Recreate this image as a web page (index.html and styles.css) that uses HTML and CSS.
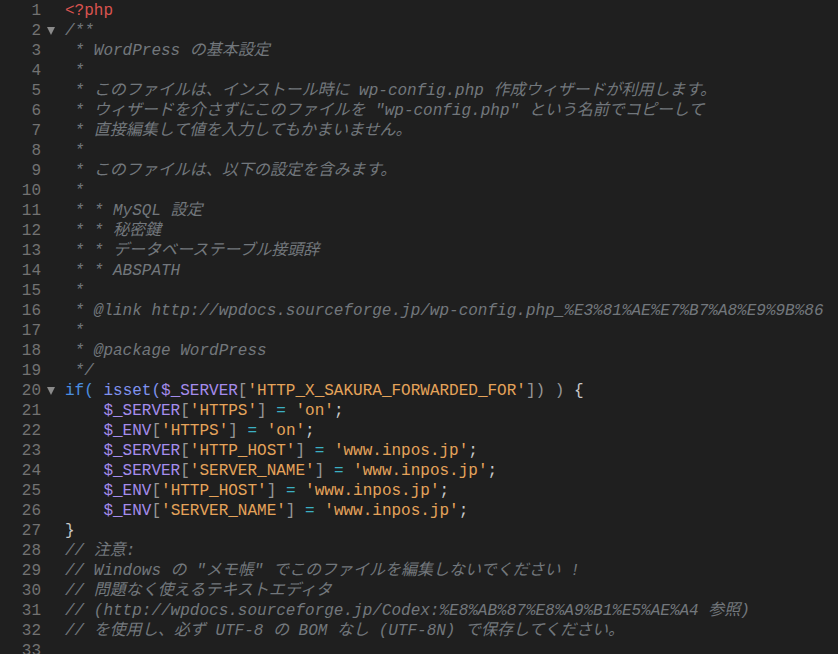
FILE: index.html
```html
<!DOCTYPE html>
<html lang="ja">
<head>
  <meta charset="UTF-8" />
  <title>wp-config.php</title>
  <link rel="stylesheet" href="styles.css">
</head>
<body>

<div class="editor">
  <div class="line"><span class="ln">1</span><span class="fold"></span><span class="code"><span class="tag">&lt;?php</span></span></div>
  <div class="line"><span class="ln">2</span><span class="fold open"></span><span class="code c">/**</span></div>
  <div class="line"><span class="ln">3</span><span class="fold"></span><span class="code c"> * WordPress の基本設定</span></div>
  <div class="line"><span class="ln">4</span><span class="fold"></span><span class="code c"> *</span></div>
  <div class="line"><span class="ln">5</span><span class="fold"></span><span class="code c"> * このファイルは、インストール時に wp-config.php 作成ウィザードが利用します。</span></div>
  <div class="line"><span class="ln">6</span><span class="fold"></span><span class="code c"> * ウィザードを介さずにこのファイルを "wp-config.php" という名前でコピーして</span></div>
  <div class="line"><span class="ln">7</span><span class="fold"></span><span class="code c"> * 直接編集して値を入力してもかまいません。</span></div>
  <div class="line"><span class="ln">8</span><span class="fold"></span><span class="code c"> *</span></div>
  <div class="line"><span class="ln">9</span><span class="fold"></span><span class="code c"> * このファイルは、以下の設定を含みます。</span></div>
  <div class="line"><span class="ln">10</span><span class="fold"></span><span class="code c"> *</span></div>
  <div class="line"><span class="ln">11</span><span class="fold"></span><span class="code c"> * * MySQL 設定</span></div>
  <div class="line"><span class="ln">12</span><span class="fold"></span><span class="code c"> * * 秘密鍵</span></div>
  <div class="line"><span class="ln">13</span><span class="fold"></span><span class="code c"> * * データベーステーブル接頭辞</span></div>
  <div class="line"><span class="ln">14</span><span class="fold"></span><span class="code c"> * * ABSPATH</span></div>
  <div class="line"><span class="ln">15</span><span class="fold"></span><span class="code c"> *</span></div>
  <div class="line"><span class="ln">16</span><span class="fold"></span><span class="code c"> * @link http://wpdocs.sourceforge.jp/wp-config.php_%E3%81%AE%E7%B7%A8%E9%9B%86</span></div>
  <div class="line"><span class="ln">17</span><span class="fold"></span><span class="code c"> *</span></div>
  <div class="line"><span class="ln">18</span><span class="fold"></span><span class="code c"> * @package WordPress</span></div>
  <div class="line"><span class="ln">19</span><span class="fold"></span><span class="code c"> */</span></div>
  <div class="line"><span class="ln">20</span><span class="fold open"></span><span class="code"><span class="kw">if(</span> <span class="fn">isset(</span><span class="var">$_SERVER</span><span class="pn">[</span><span class="str">'HTTP_X_SAKURA_FORWARDED_FOR'</span><span class="pn">]) )</span> {</span></div>
  <div class="line"><span class="ln">21</span><span class="fold"></span><span class="code">    <span class="var">$_SERVER</span><span class="pn">[</span><span class="str">'HTTPS'</span><span class="pn">]</span> <span class="op">=</span> <span class="str">'on'</span>;</span></div>
  <div class="line"><span class="ln">22</span><span class="fold"></span><span class="code">    <span class="var">$_ENV</span><span class="pn">[</span><span class="str">'HTTPS'</span><span class="pn">]</span> <span class="op">=</span> <span class="str">'on'</span>;</span></div>
  <div class="line"><span class="ln">23</span><span class="fold"></span><span class="code">    <span class="var">$_SERVER</span><span class="pn">[</span><span class="str">'HTTP_HOST'</span><span class="pn">]</span> <span class="op">=</span> <span class="str">'www.inpos.jp'</span>;</span></div>
  <div class="line"><span class="ln">24</span><span class="fold"></span><span class="code">    <span class="var">$_SERVER</span><span class="pn">[</span><span class="str">'SERVER_NAME'</span><span class="pn">]</span> <span class="op">=</span> <span class="str">'www.inpos.jp'</span>;</span></div>
  <div class="line"><span class="ln">25</span><span class="fold"></span><span class="code">    <span class="var">$_ENV</span><span class="pn">[</span><span class="str">'HTTP_HOST'</span><span class="pn">]</span> <span class="op">=</span> <span class="str">'www.inpos.jp'</span>;</span></div>
  <div class="line"><span class="ln">26</span><span class="fold"></span><span class="code">    <span class="var">$_ENV</span><span class="pn">[</span><span class="str">'SERVER_NAME'</span><span class="pn">]</span> <span class="op">=</span> <span class="str">'www.inpos.jp'</span>;</span></div>
  <div class="line"><span class="ln">27</span><span class="fold"></span><span class="code">}</span></div>
  <div class="line"><span class="ln">28</span><span class="fold"></span><span class="code c">// 注意:</span></div>
  <div class="line"><span class="ln">29</span><span class="fold"></span><span class="code c">// Windows の "メモ帳" でこのファイルを編集しないでください !</span></div>
  <div class="line"><span class="ln">30</span><span class="fold"></span><span class="code c">// 問題なく使えるテキストエディタ</span></div>
  <div class="line"><span class="ln">31</span><span class="fold"></span><span class="code c">// (http://wpdocs.sourceforge.jp/Codex:%E8%AB%87%E8%A9%B1%E5%AE%A4 参照)</span></div>
  <div class="line"><span class="ln">32</span><span class="fold"></span><span class="code c">// を使用し、必ず UTF-8 の BOM なし (UTF-8N) で保存してください。</span></div>
  <div class="line"><span class="ln">33</span><span class="fold"></span><span class="code"></span></div>
</div>

</body>
</html>
```

FILE: styles.css
```css
body {
  margin: 0;
  background-color: #1f1f1f;
  font-family: "Liberation Mono", "Noto Sans CJK JP", monospace;
  font-size: 16px;
  color: #c8c8c8;
  overflow: hidden;
}

.editor {
  padding-top: 1px;
}

.line {
  display: flex;
  height: 20px;
  line-height: 20px;
}

.ln {
  width: 41px;
  text-align: right;
  color: #727272;
  flex-shrink: 0;
}

.fold {
  width: 24px;
  flex-shrink: 0;
  position: relative;
}

/* small grey triangle for foldable blocks */
.fold.open::after {
  content: "";
  position: absolute;
  left: 6px;
  top: 6px;
  border-left: 4px solid transparent;
  border-right: 4px solid transparent;
  border-top: 8px solid #8a8a8a;
}

.code {
  white-space: pre;
}

.c {
  color: #72777c;
  font-style: italic;
}

.tag {
  color: #d9534f;
}

.kw {
  color: #4b8ee0;
}

.fn {
  color: #7f92ee;
}

.var {
  color: #a58cec;
}

.str {
  color: #e5a35a;
}

.pn {
  color: #969696;
}

.op {
  color: #3cb0c4;
}
```
